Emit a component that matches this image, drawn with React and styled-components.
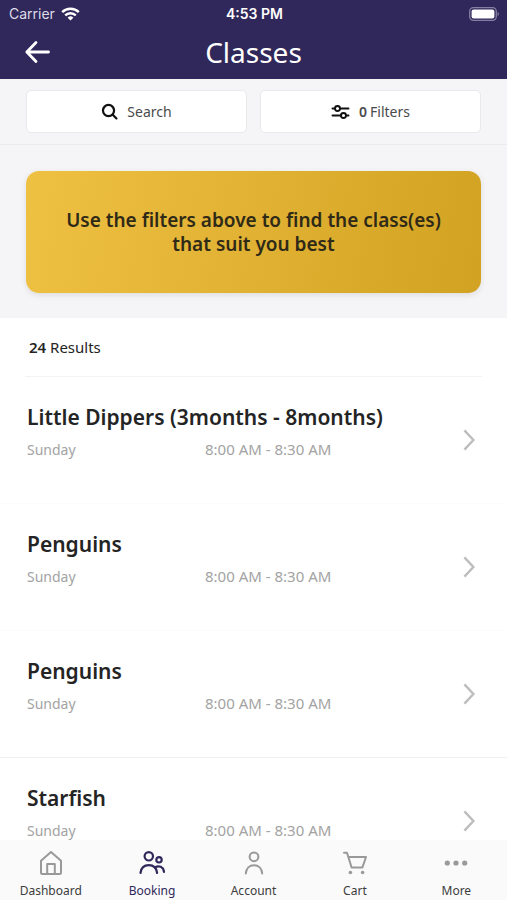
import styled, { createGlobalStyle } from 'styled-components'

const GlobalStyle = createGlobalStyle`
    :root {
        --color-primary: #30285a;
        --color-text: #242424;
        --color-muted: #a3a3a3;
        --color-panel: #f5f5f8;
        --font-main: 'Noto Sans', 'Open Sans', sans-serif;
        --font-system: Inter, 'Liberation Sans', sans-serif;
    }

    *,
    *::before,
    *::after {
        box-sizing: border-box;
    }

    body {
        margin: 0;
        background: #fff;
        color: var(--color-text);
        font-family: var(--font-main);
    }

    h1,
    h2,
    p {
        margin: 0;
    }
`

const Screen = styled.div`
    display: flex;
    flex-direction: column;
    height: 100vh;
    overflow: hidden;
`

const Header = styled.header`
    flex-shrink: 0;
    background: var(--color-primary);
    color: #fff;
`

const StatusBar = styled.div`
    display: grid;
    grid-template-columns: 1fr auto 1fr;
    align-items: center;
    height: 27px;
    padding: 0 7px 0 9px;
    font-family: var(--font-system);
    font-size: 14px;
`

const Carrier = styled.span`
    display: flex;
    align-items: center;
    gap: 6px;
    color: #dedce8;
`

const Clock = styled.time`
    font-weight: 600;
`

const Battery = styled.svg`
    justify-self: end;
`

const TitleBar = styled.div`
    display: grid;
    grid-template-columns: 1fr auto 1fr;
    align-items: center;
    height: 52px;
    padding: 0 24px 2px;
`

const BackButton = styled.button`
    justify-self: start;
    display: flex;
    padding: 0;
    border: 0;
    background: none;
    color: inherit;
    cursor: pointer;
`

const Title = styled.h1`
    font-size: 28px;
    font-weight: 400;
    line-height: 48px;
`

const Toolbar = styled.div`
    display: flex;
    flex-shrink: 0;
    gap: 13px;
    padding: 11px 26px;
    background: var(--color-panel);
    border-bottom: 1px solid #ebebee;
`

const ToolButton = styled.button`
    display: flex;
    flex: 1;
    align-items: center;
    justify-content: center;
    gap: 9px;
    height: 43px;
    padding: 0;
    background: #fff;
    border: 1px solid #e9e9ec;
    border-radius: 5px;
    color: #4a4a4a;
    font-family: inherit;
    font-size: 14px;
    cursor: pointer;

    svg {
        color: #111;
    }

    b {
        margin-right: 3px;
        font-weight: 600;
    }
`

const Notice = styled.section`
    flex-shrink: 0;
    padding: 26px 26px 25px;
    background: var(--color-panel);
`

const NoticeCard = styled.p`
    padding: 37px 32px;
    border-radius: 13px;
    background: linear-gradient(100deg, #efc143, #d2a222);
    box-shadow: 0 2px 6px rgba(0, 0, 0, 0.1);
    color: #2f2a18;
    font-size: 19px;
    font-weight: 600;
    line-height: 24px;
    text-align: center;
`

const Results = styled.main`
    flex: 1;
    min-height: 0;
    overflow: hidden;
`

const Count = styled.p`
    margin: 0 25px;
    padding: 0 4px;
    border-bottom: 1px solid #f3f3f3;
    font-size: 15px;
    line-height: 58px;

    b {
        font-weight: 600;
    }
`

const ClassRow = styled.a`
    display: flex;
    align-items: center;
    justify-content: space-between;
    height: 127px;
    padding: 0 32px 0 27px;
    border-bottom: 1px solid ${({ $strong }) => ($strong ? '#f0f0f0' : '#fcfcfc')};
    color: inherit;
    text-decoration: none;
`

const ClassInfo = styled.div`
    display: grid;
    grid-template-columns: 178px auto;
    align-items: baseline;
    row-gap: 2px;
    padding-bottom: 20px;
    color: var(--color-muted);
    font-size: 14px;
    line-height: 24px;
`

const ClassName = styled.h2`
    grid-column: 1 / -1;
    color: var(--color-text);
    font-size: 21px;
    font-weight: 600;
    line-height: 36px;
`

const ClassTime = styled.span`
    font-size: 15px;
`

const TabBar = styled.nav`
    display: flex;
    flex-shrink: 0;
    height: 60px;
    background: #fafafa;
`

const Tab = styled.a`
    display: flex;
    flex: 1;
    flex-direction: column;
    align-items: center;
    gap: 6px;
    padding-top: 10px;
    color: ${({ $active }) => ($active ? 'var(--color-primary)' : '#3c3c3c')};
    font-size: 12px;
    line-height: 18px;
    text-decoration: none;

    svg {
        color: ${({ $active }) => ($active ? 'var(--color-primary)' : '#999')};
    }
`

const Icon = ({ size = 26, stroke = 2, children }) => (
    <svg
        width={size}
        height={size}
        viewBox="0 0 26 26"
        fill="none"
        stroke="currentColor"
        strokeWidth={stroke}
        strokeLinecap="round"
        strokeLinejoin="round"
        aria-hidden="true"
    >
        {children}
    </svg>
)

const WifiIcon = () => (
    <svg
        width="19"
        height="14"
        viewBox="0 0 19 14"
        fill="none"
        stroke="#fff"
        strokeWidth="2.4"
        aria-hidden="true"
    >
        <path d="M1.2 5.2a11.8 11.8 0 0 1 16.6 0" />
        <path d="M4.2 8.4a7.5 7.5 0 0 1 10.6 0" />
        <path d="M9.5 13.6 6.6 10.7a4.1 4.1 0 0 1 5.8 0Z" fill="#fff" stroke="none" />
    </svg>
)

const BatteryIcon = () => (
    <Battery width="31" height="14" viewBox="0 0 31 14" aria-hidden="true">
        <rect x="0.7" y="0.7" width="26.6" height="12.6" rx="3.8" fill="none" stroke="#8580a3" strokeWidth="1.3" />
        <rect x="2.6" y="2.4" width="22.8" height="9.2" rx="2" fill="#fff" />
        <path d="M28.6 4.8a2.5 2.5 0 0 1 0 4.4Z" fill="#8580a3" />
    </Battery>
)

const ArrowIcon = () => (
    <Icon stroke={2.8}>
        <path d="M24.5 13H3.5M12 3.5 2.8 13l9.200 9.500" />
    </Icon>
)

const SearchIcon = () => (
    <Icon size={17} stroke={3.4}>
        <circle cx="11.5" cy="11.5" r="8.5" />
        <path d="m18 18 5.6 5.6" />
    </Icon>
)

const FiltersIcon = () => (
    <svg
        width="19"
        height="16"
        viewBox="0 0 19 16"
        fill="none"
        stroke="currentColor"
        strokeWidth="1.9"
        strokeLinecap="round"
        aria-hidden="true"
    >
        <path d="M1.5 4.5h2.3M9.2 4.5h8.3M1.5 11.5h8.3M15.2 11.5h2.3" />
        <circle cx="6.5" cy="4.5" r="2.5" />
        <circle cx="12.5" cy="11.5" r="2.5" />
    </svg>
)

const ChevronIcon = () => (
    <svg width="12" height="22" viewBox="0 0 12 22" fill="none" stroke="#bdbdbd" strokeWidth="2.4" aria-hidden="true">
        <path d="m1.4 1.4 9 9.6-9 9.6" />
    </svg>
)

const HomeIcon = () => (
    <Icon>
        <path d="M3 10.8 13 2l10 8.800V22.500a1.500 1.500 0 0 1-1.500 1.500h-17A1.500 1.500 0 0 1 3 22.500Z" />
        <path d="M9.200 23.500V14h7.600v9.500" />
    </Icon>
)

const BookingIcon = () => (
    <Icon stroke={2.2}>
        <circle cx="9.800" cy="6.300" r="4.200" />
        <circle cx="20" cy="9.800" r="2.700" />
        <path d="M1.500 23c.6-5 3.900-7.800 8.300-7.800s7.700 2.800 8.300 7.800" />
        <path d="M16 17.500c3.800-2.600 8.500-.7 9 4.300" />
    </Icon>
)

const AccountIcon = () => (
    <Icon>
        <circle cx="13" cy="6.800" r="4.400" />
        <path d="M4.800 23.500c.4-5.200 3.700-8.300 8.200-8.300s7.800 3.100 8.200 8.300" />
    </Icon>
)

const CartIcon = () => (
    <Icon>
        <path d="M2 2.800h3l4.600 14.700h10.800L24 7H6.400" />
        <g fill="currentColor" stroke="none">
            <circle cx="8.400" cy="22.500" r="1.800" />
            <circle cx="20.600" cy="22.500" r="1.800" />
        </g>
    </Icon>
)

const MoreIcon = () => (
    <Icon>
        <g fill="currentColor" stroke="none">
            <circle cx="4.300" cy="13" r="2.600" />
            <circle cx="13" cy="13" r="2.600" />
            <circle cx="21.700" cy="13" r="2.600" />
        </g>
    </Icon>
)

const classes = [
    { id: 1, name: 'Little Dippers (3months - 8months)' },
    { id: 2, name: 'Penguins' },
    { id: 3, name: 'Penguins', strong: true },
    { id: 4, name: 'Starfish' },
]

const tabs = [
    { label: 'Dashboard', icon: HomeIcon },
    { label: 'Booking', icon: BookingIcon, active: true },
    { label: 'Account', icon: AccountIcon },
    { label: 'Cart', icon: CartIcon },
    { label: 'More', icon: MoreIcon },
]

function App() {
    return (
        <Screen>
            <GlobalStyle />
            <Header>
                <StatusBar>
                    <Carrier>
                        Carrier <WifiIcon />
                    </Carrier>
                    <Clock>4:53 PM</Clock>
                    <BatteryIcon />
                </StatusBar>
                <TitleBar>
                    <BackButton type="button" aria-label="Back">
                        <ArrowIcon />
                    </BackButton>
                    <Title>Classes</Title>
                </TitleBar>
            </Header>

            <Toolbar>
                <ToolButton type="button">
                    <SearchIcon />
                    Search
                </ToolButton>
                <ToolButton type="button">
                    <FiltersIcon />
                    <span>
                        <b>0</b>Filters
                    </span>
                </ToolButton>
            </Toolbar>

            <Notice>
                <NoticeCard>
                    Use the filters above to find the class(es) that suit you best
                </NoticeCard>
            </Notice>

            <Results>
                <Count>
                    <b>24</b> Results
                </Count>
                {classes.map(({ id, name, strong }) => (
                    <ClassRow key={id} href={`#class-${id}`} $strong={strong}>
                        <ClassInfo>
                            <ClassName>{name}</ClassName>
                            <span>Sunday</span>
                            <ClassTime>8:00 AM - 8:30 AM</ClassTime>
                        </ClassInfo>
                        <ChevronIcon />
                    </ClassRow>
                ))}
            </Results>

            <TabBar>
                {tabs.map(({ label, icon: TabIcon, active }) => (
                    <Tab
                        key={label}
                        href={`#${label.toLowerCase()}`}
                        $active={active}
                        aria-current={active ? 'page' : undefined}
                    >
                        <TabIcon />
                        {label}
                    </Tab>
                ))}
            </TabBar>
        </Screen>
    )
}

export default App
